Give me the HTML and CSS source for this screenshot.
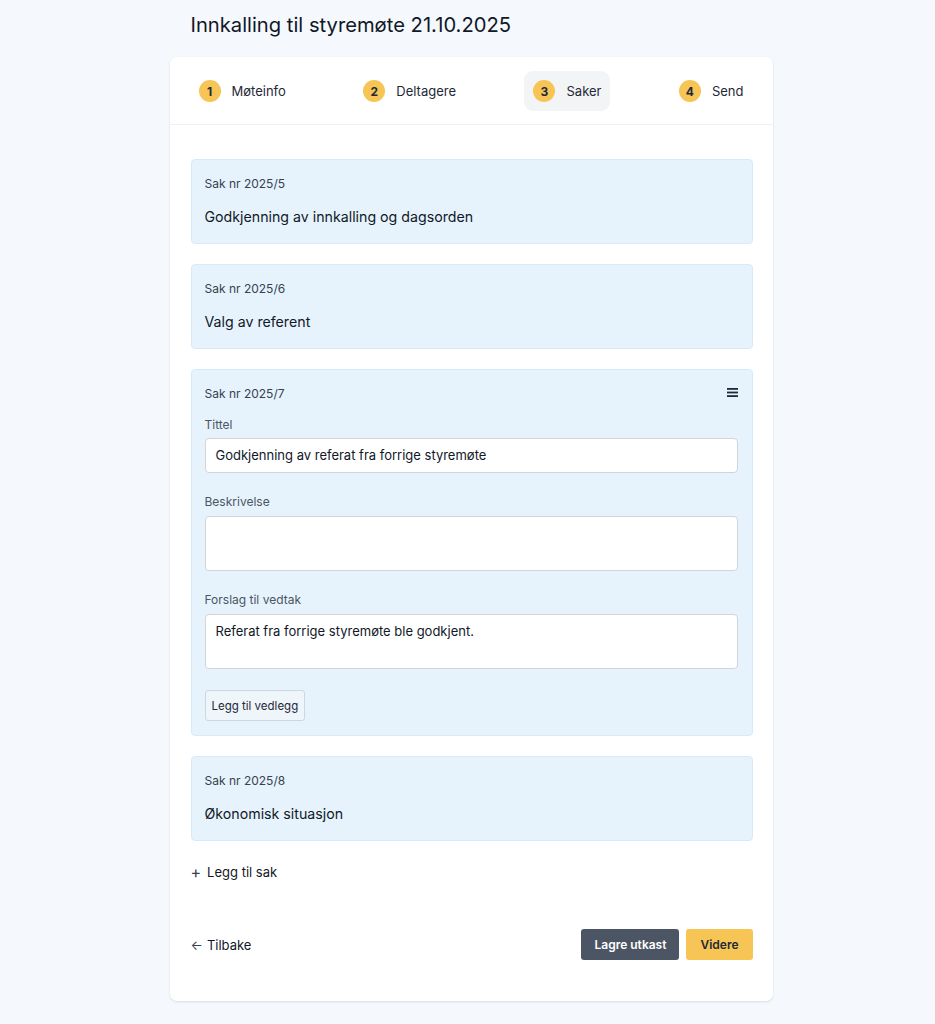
FILE: index.html
```html
<!DOCTYPE html>
<html lang="no">
<head>
<meta charset="utf-8">
<title>Innkalling til styremøte</title>
<link rel="stylesheet" href="styles.css">
</head>
<body>
<div class="wrap">
  <h1 class="page-title">Innkalling til styremøte 21.10.2025</h1>
  <div class="card">
    <nav class="steps">
      <div class="step"><span class="num">1</span><span>Møteinfo</span></div>
      <div class="step"><span class="num">2</span><span>Deltagere</span></div>
      <div class="step active"><span class="num">3</span><span>Saker</span></div>
      <div class="step"><span class="num">4</span><span>Send</span></div>
    </nav>
    <div class="body">
      <div class="sak-list">
        <div class="sak">
          <div class="sak-nr">Sak nr 2025/5</div>
          <div class="sak-title">Godkjenning av innkalling og dagsorden</div>
        </div>
        <div class="sak">
          <div class="sak-nr">Sak nr 2025/6</div>
          <div class="sak-title">Valg av referent</div>
        </div>
        <div class="sak open">
          <div class="sak-head">
            <div class="sak-nr">Sak nr 2025/7</div>
            <svg class="menu-icon" width="11" height="9" viewBox="0 0 11 9"><rect x="0" y="0" width="11" height="1.8" fill="#1f2937"/><rect x="0" y="3.6" width="11" height="1.8" fill="#1f2937"/><rect x="0" y="7.2" width="11" height="1.8" fill="#1f2937"/></svg>
          </div>
          <div class="field first">
            <label class="label">Tittel</label>
            <div class="input">Godkjenning av referat fra forrige styremøte</div>
          </div>
          <div class="field">
            <label class="label">Beskrivelse</label>
            <div class="input area"></div>
          </div>
          <div class="field">
            <label class="label">Forslag til vedtak</label>
            <div class="input area">Referat fra forrige styremøte ble godkjent.</div>
          </div>
          <button class="attach">Legg til vedlegg</button>
        </div>
        <div class="sak">
          <div class="sak-nr">Sak nr 2025/8</div>
          <div class="sak-title">Økonomisk situasjon</div>
        </div>
      </div>
      <div class="add-sak"><span class="plus">+</span>Legg til sak</div>
      <div class="footer">
        <div class="back"><span class="arrow">←</span>Tilbake</div>
        <div class="actions">
          <button class="btn dark">Lagre utkast</button>
          <button class="btn yellow">Videre</button>
        </div>
      </div>
    </div>
  </div>
</div>
</body>
</html>
```
FILE: styles.css
```css
* { box-sizing: border-box; }
html, body { margin: 0; padding: 0; }
body {
  background: #f5f9fe;
  font-family: Inter, "Noto Sans", sans-serif;
  color: #1f2937;
}
.wrap {
  width: 603px;
  margin-left: calc(50% - 298px);
  padding-top: 12px;
}
.page-title {
  margin: 0 0 19px;
  padding-left: 21px;
  font-size: 20.2px;
  line-height: 26px;
  font-weight: 400;
  color: #111827;
}
.card {
  background: #fff;
  border-radius: 7px;
  box-shadow: 0 1px 3px rgba(0,0,0,0.08), 0 1px 2px rgba(0,0,0,0.04);
  margin-bottom: 24px;
}
.steps {
  display: flex;
  justify-content: space-between;
  padding: 14px 20px 13px 20px;
  border-bottom: 1px solid #eef0f3;
}
.step {
  display: flex;
  align-items: center;
  gap: 11px;
  height: 40px;
  padding: 0 9px;
  border-radius: 9px;
  font-size: 13px;
  color: #1f2937;
}
.step.active { background: #f3f4f6; }
.num {
  width: 22px;
  height: 22px;
  border-radius: 50%;
  background: #f6c555;
  display: flex;
  align-items: center;
  justify-content: center;
  font-size: 12px;
  font-weight: 700;
  color: #1f2937;
}
.body { padding: 34px 20px 41px 21px; }
.sak-list { display: flex; flex-direction: column; gap: 20px; }
.sak {
  background: #e6f3fd;
  border: 1px solid #d8eaf7;
  border-radius: 4px;
  padding: 16px 14px 14px 13px;
}
.sak-nr { font-size: 12px; line-height: 16px; color: #374151; }
.sak-title { margin-top: 13px; font-size: 14.2px; line-height: 24px; color: #111827; }
.sak-head { display: flex; justify-content: space-between; align-items: center; }
.menu-icon { display: block; margin-top: -4px; }
.field { margin-top: 21px; }
.field.first { margin-top: 15px; }
.label { display: block; font-size: 12px; line-height: 16px; color: #4b5563; margin-bottom: 5px; }
.input {
  background: #fff;
  border: 1px solid #d1d5db;
  border-radius: 4px;
  height: 35px;
  padding: 0 10px;
  font-size: 13px;
  line-height: 33px;
  color: #111827;
}
.input.area { height: 55px; line-height: 20px; padding-top: 6px; }
.field + .field .label { margin-bottom: 6px; }
.attach {
  margin-top: 21px;
  height: 31px;
  padding: 0 6px;
  background: #eef5fb;
  border: 1px solid #cdd7e0;
  border-radius: 3px;
  font-family: inherit;
  font-size: 11.5px;
  color: #1f2937;
  display: block;
}
.add-sak {
  margin-top: 21px;
  font-size: 13px;
  line-height: 20px;
  color: #111827;
  display: flex;
  align-items: center;
}
.plus { font-size: 16px; margin-right: 6px; color: #374151; }
.footer {
  margin-top: 47px;
  display: flex;
  justify-content: space-between;
  align-items: center;
}
.back { font-size: 13px; display: flex; align-items: center; color: #111827; }
.arrow { margin-right: 4px; color: #374151; }
.actions { display: flex; gap: 7px; }
.btn {
  height: 31px;
  border-radius: 3px;
  border: none;
  font-family: inherit;
  font-size: 12px;
  font-weight: 600;
  padding: 0 13px;
}
.btn.dark { background: #4b5563; color: #fff; }
.btn.yellow { background: #f6c555; color: #1f2937; padding: 0 14px; }
```
